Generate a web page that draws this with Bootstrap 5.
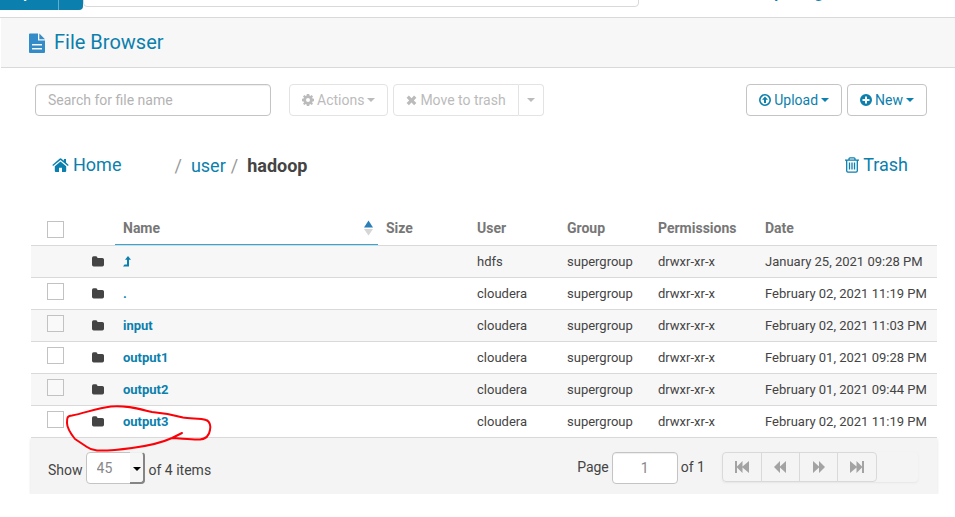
<!DOCTYPE html>
<html lang="en">
<head>
<meta charset="utf-8">
<meta name="viewport" content="width=device-width, initial-scale=1">
<title>File Browser</title>
<link href="https://cdn.jsdelivr.net/npm/bootstrap@5.3.0/dist/css/bootstrap.min.css" rel="stylesheet">
<style>
  :root { --hue: #0b7fad; --line: #d9d9d9; --dim: #bbb; }
  body { font-family: Roboto, "Liberation Sans", sans-serif; font-size: 14px; line-height: 20px; color: #444; background: #fff; }
  a { color: var(--hue); text-decoration: none; }
  svg { display: block; flex: none; fill: currentColor; }

  .topbar { height: 18px; overflow: hidden; border-bottom: 1px solid var(--line); }
  .query-group { margin-bottom: 7px; }
  .query-group .btn { height: 32px; border: 0; background: var(--hue); color: #fff; font-size: 14px; line-height: 20px; }
  .query-group .query-main { width: 58px; padding: 5px 28px 7px 0; border-radius: 0; text-align: right; direction: rtl; }
  .query-group .query-more { width: 25px; margin-left: 0; padding: 0; border-left: 1px solid #5fb0cf; border-radius: 0 4px 4px 0; }
  .top-search { width: 556px; height: 32px; margin: 0 0 10px; border: 1px solid var(--line); border-radius: 4px; }
  .account { margin: 0 100px 14px 0; font-size: 15px; font-weight: 700; }

  .page-head { height: 50px; margin-left: 1px; padding-left: 28px; gap: 9px; background: #f7f7f7; border-bottom: 1px solid var(--line); }
  .page-head h1 { font-size: 20px; line-height: 28px; font-weight: 400; color: var(--hue); padding-bottom: 2px; }
  .page-head svg { color: #338bc7; }

  .tools { padding: 16px 28px 0 35px; }
  .tools .form-control { width: 236px; height: 32px; margin-right: 18px; padding: 0 12px; font-size: 14px; border: 1px solid #c4c4c4; border-radius: 4px; box-shadow: inset 0 1px 1px #eee; }
  .tools .form-control::placeholder { color: #b3b3b3; opacity: 1; }
  .tool-btn { display: inline-flex; align-items: center; height: 32px; padding: 0 12px; gap: 3px; border: 1px solid #c4c4c4; border-radius: 4px; background: #fff; color: var(--hue); font-size: 14px; line-height: 20px; white-space: nowrap; }
  .tool-btn:disabled { border-color: #e3e3e3; color: var(--dim); background: #fff; opacity: 1; }
  .tool-btn.only-caret { padding: 0 8px; }
  .gap-5px { gap: 5px; }

  .crumbs { padding: 36px 47px 0 52px; font-size: 18px; line-height: 26px; }
  .crumbs ol { font-size: 18px; padding: 1px 0 0 53px; }
  .crumbs .slash { color: #999; padding-right: 9px; }
  .crumbs .trail { margin-right: 5px; }
  .crumbs .here { font-weight: 700; color: #444; }
  .crumbs a { display: inline-flex; align-items: center; gap: 4px; }

  .listing { margin: 34px 18px 0 31px; }
  .files { width: 100%; table-layout: fixed; border-collapse: separate; border-spacing: 0; font-size: 13px; }
  .files th, .files td { height: 32px; padding: 0 8px; vertical-align: middle; border-bottom: 1px solid var(--line); white-space: nowrap; }
  .files th { height: 33px; padding-bottom: 2px; font-size: 14px; font-weight: 700; color: #777; }
  .files th.sorted { padding-right: 0; box-shadow: inset 0 -1px #2fa9d8; }
  .files tbody tr:nth-child(odd) { background: #f7f7f7; }
  .files td a { font-weight: 700; }
  .files .tick-cell { padding-left: 16px; }
  .files .kind { padding-left: 9px; }
  .c-tick { width: 52px; } .c-icon { width: 32px; } .c-size { width: 91px; }
  .c-group { width: 91px; } .c-user { width: 90px; } .c-perm { width: 107px; } .c-date { width: 180px; }
  .tick { appearance: none; display: block; width: 17px; height: 17px; margin: 0; border: 1px solid #c2c2c2; background: #fff; border-radius: 0; }
  tbody .tick { margin-bottom: 4px; }
  tbody tr:nth-child(odd) .tick { background: #f9f9f9; }
  thead .tick { margin-top: 2px; }
  .tick:checked { background: var(--hue); }
  .scribble { position: absolute; left: -18px; top: -2px; z-index: 2; pointer-events: none; fill: none; stroke: #fb0007; stroke-width: 2; stroke-linecap: round; stroke-linejoin: round; }

  .pager { padding: 14px 19px 10px 17px; background: #f4f4f4; box-shadow: 0 1px 3px #ddd; }
  .count { position: relative; width: 59px; height: 32px; margin: 0 4px 0 3px; }
  .count select { appearance: none; width: 100%; height: 32px; padding: 0 10px; border: 1px solid #c4c4c4; border-radius: 4px; background: #fff; color: #888; font-size: 14px; }
  .count span { position: absolute; right: 0; top: 0; width: 15px; height: 32px; padding: 14px 0 0 3px; border: solid #858585; border-width: 1px 2px 2px 0; border-top-color: #eee; border-radius: 0 4px 4px 0; background: #f6f6f6; color: #000; pointer-events: none; }
  .page-no { width: 66px; height: 32px; margin: 0 3px; padding: 0; border: 1px solid #c4c4c4; border-radius: 4px; background: #fff; color: #888; text-align: center; font-size: 14px; box-shadow: inset 0 1px 1px #eee; }
  .page-label { padding-top: 5px; }
  .steps { width: 196px; margin-left: 17px; border-radius: 4px; box-shadow: 0 1px 2px #e6e6e6; }
  .steps button { display: flex; align-items: center; justify-content: center; width: 39px; height: 30px; margin-left: -1px; padding: 0; border: 1px solid var(--line); background: #f4f4f4; color: #a3a3a3; }
  .steps button:first-child { width: 40px; margin-left: 0; border-radius: 4px 0 0 4px; }
  .steps button:last-child { width: 40px; border-radius: 0 4px 4px 0; }
</style>
</head>
<body>
<svg class="d-none" aria-hidden="true">
  <symbol id="caret" viewBox="0 0 8 4"><path d="M0 0h8L4 4z"/></symbol>
  <symbol id="folder" viewBox="0 0 12 11"><path d="M0 2Q0 .3 1.600.3H4Q5.400.3 5.500 2H10.300Q12 2 12 3.600V8.800Q12 10.500 10.300 10.500H1.700Q0 10.500 0 8.800z"/></symbol>
</svg>

<header class="topbar d-flex align-items-end">
  <div class="query-group btn-group">
    <button class="btn query-main" type="button">Query</button><button class="btn query-more ms-0" type="button" aria-label="More editors"></button>
  </div>
  <input class="top-search" type="search" aria-label="Search data and saved documents">
  <a class="account ms-auto" href="#">pavangoud_</a>
</header>

<div class="page-head d-flex align-items-center">
  <svg width="16" height="20" viewBox="0 0 16 20"><path fill-rule="evenodd" d="M1 .5H9V7.500H16V19Q16 20 15 20H1Q0 20 0 19V1.500Q0 .5 1 .5zM3 11V12.500H13V11zM3 15V16.500H13V15z"/><path d="M10.300.5 16 6.200H10.300z"/></svg>
  <h1 class="m-0">File Browser</h1>
</div>

<main>
  <div class="tools d-flex align-items-center">
    <input class="form-control" type="text" placeholder="Search for file name" aria-label="Search for file name">
    <div class="d-flex gap-5px">
      <button class="tool-btn" type="button" disabled>
        <svg width="12" height="12" viewBox="0 0 12 12"><path fill-rule="evenodd" d="M4.800 0H7.200L7.500 1.600 8.400 2 9.700 1 11 2.400 10.100 3.700 10.500 4.600 12 4.800V7.200L10.500 7.500 10.100 8.400 11 9.700 9.700 11 8.400 10.100 7.500 10.500 7.200 12H4.800L4.600 10.500 3.700 10.100 2.400 11 1 9.700 2 8.400 1.600 7.500 0 7.200V4.800L1.600 4.600 2 3.700 1 2.400 2.400 1 3.700 2 4.600 1.600zM6 4A2 2 0 1 0 6 8 2 2 0 1 0 6 4z"/></svg>
        Actions <svg width="8" height="4"><use href="#caret"/></svg>
      </button>
      <div class="btn-group">
        <button class="tool-btn rounded-end-0" type="button" disabled>
          <svg width="11" height="11" viewBox="0 0 11 11"><path d="M.6 2.800 2.900.6 5.500 3.200 8.100.6 10.400 2.800 7.800 5.400 10.400 8 8.100 10.200 5.500 7.600 2.900 10.200.6 8 3.200 5.400z"/></svg>
          Move to trash
        </button><button class="tool-btn only-caret rounded-start-0 border-start-0" type="button" disabled aria-label="More delete options"><svg width="8" height="4"><use href="#caret"/></svg></button>
      </div>
    </div>
    <div class="d-flex gap-5px ms-auto">
      <button class="tool-btn" type="button">
        <svg width="12" height="12" viewBox="0 0 12 12"><path fill-rule="evenodd" d="M6 0A6 6 0 1 1 6 12 6 6 0 1 1 6 0zM6 1.600A4.400 4.400 0 1 0 6 10.400 4.400 4.400 0 1 0 6 1.600z"/><path d="M6 2.600 9 5.800H7V9H5V5.800H3z"/></svg>
        Upload <svg width="8" height="4"><use href="#caret"/></svg>
      </button>
      <button class="tool-btn" type="button">
        <svg width="12" height="12" viewBox="0 0 12 12"><path fill-rule="evenodd" d="M6 0A6 6 0 1 1 6 12 6 6 0 1 1 6 0zM5 2.500V5H2.500V7H5V9.500H7V7H9.500V5H7V2.500z"/></svg>
        New <svg width="8" height="4"><use href="#caret"/></svg>
      </button>
    </div>
  </div>

  <nav class="crumbs d-flex align-items-start" aria-label="Path">
    <a href="#"><svg width="17" height="14" viewBox="0 0 17 14"><path d="M8.500 3.600 14.200 8.300V13Q14.200 14 13.200 14H10V9.800H7V14H3.800Q2.800 14 2.800 13V8.300z"/><path d="M8.500.3Q9 .3 9.500.8L11.900 2.800V1H14V4.600L16.700 6.900 15.900 7.900 8.500 1.900 1.100 7.900.3 6.900 7.500.8Q8 .3 8.500.3z"/></svg>Home</a>
    <ol class="list-unstyled d-flex m-0">
      <li class="slash">/</li>
      <li class="trail"><a href="#">user</a></li>
      <li class="slash">/</li>
      <li class="here" aria-current="page">hadoop</li>
    </ol>
    <a class="ms-auto" href="#"><svg width="14" height="16" viewBox="0 0 14 16"><g fill="none" stroke="currentColor" stroke-width="1.300"><path d="M0 3.200H14M4 3V1.700Q4 .8 5 .8H9Q10 .8 10 1.700V3M1.700 3.500V13.800Q1.700 15.200 3 15.200H11Q12.300 15.200 12.300 13.800V3.500M4.500 5.500V12.500M7 5.500V12.500M9.500 5.500V12.500"/></g></svg>Trash</a>
  </nav>

  <section class="listing">
    <table class="files">
      <colgroup><col class="c-tick"><col class="c-icon"><col><col class="c-size"><col class="c-user"><col class="c-group"><col class="c-perm"><col class="c-date"></colgroup>
      <thead>
        <tr>
          <th class="tick-cell"><input class="tick" type="checkbox" aria-label="Select all"></th>
          <th></th>
          <th class="sorted"><div class="d-flex align-items-center justify-content-between">Name
            <svg width="19" height="16" viewBox="0 0 19 16"><path fill="#2a7fb9" d="M5 7.500 9.500.5 14 7.500z"/><path fill="#d6d6d6" d="M5 9H14L9.500 15.500z"/></svg></div></th>
          <th>Size</th><th>User</th><th>Group</th><th>Permissions</th><th>Date</th>
        </tr>
      </thead>
      <tbody>
        <tr>
          <td></td><td class="kind"><svg width="12" height="11"><use href="#folder"/></svg></td>
          <td><a href="#" aria-label="Parent folder"><svg width="8" height="11" viewBox="0 0 8 11"><path d="M5 0 8 3.700H6V10.500H0L1.500 8.500H4V3.700H2z"/></svg></a></td>
          <td></td><td>hdfs</td><td>supergroup</td><td>drwxr-xr-x</td><td>January 25, 2021 09:28 PM</td>
        </tr>
        <tr>
          <td class="tick-cell"><input class="tick" type="checkbox" aria-label="Select ."></td><td class="kind"><svg width="12" height="11"><use href="#folder"/></svg></td>
          <td><a href="#">.</a></td><td></td><td>cloudera</td><td>supergroup</td><td>drwxr-xr-x</td><td>February 02, 2021 11:19 PM</td>
        </tr>
        <tr>
          <td class="tick-cell"><input class="tick" type="checkbox" aria-label="Select input"></td><td class="kind"><svg width="12" height="11"><use href="#folder"/></svg></td>
          <td><a href="#">input</a></td><td></td><td>cloudera</td><td>supergroup</td><td>drwxr-xr-x</td><td>February 02, 2021 11:03 PM</td>
        </tr>
        <tr>
          <td class="tick-cell"><input class="tick" type="checkbox" aria-label="Select output1"></td><td class="kind"><svg width="12" height="11"><use href="#folder"/></svg></td>
          <td><a href="#">output1</a></td><td></td><td>cloudera</td><td>supergroup</td><td>drwxr-xr-x</td><td>February 01, 2021 09:28 PM</td>
        </tr>
        <tr>
          <td class="tick-cell"><input class="tick" type="checkbox" aria-label="Select output2"></td><td class="kind"><svg width="12" height="11"><use href="#folder"/></svg></td>
          <td><a href="#">output2</a></td><td></td><td>cloudera</td><td>supergroup</td><td>drwxr-xr-x</td><td>February 01, 2021 09:44 PM</td>
        </tr>
        <tr>
          <td class="tick-cell"><input class="tick" type="checkbox" aria-label="Select output3"></td>
          <td class="kind position-relative"><svg width="12" height="11"><use href="#folder"/></svg>
            <svg class="scribble" width="148" height="50" viewBox="65 404 148 50"><path d="M182 433 172 438C159 444 147 446 132 448Q110 451 97 450.500 91 450 87 447L75 439Q67 429 67 423C67 418 67 416 72 415.500 85 413 97 408 111 406.500 126 405 139 409 152 412 165 413 174 415 183 417.500 190 419 200 418 206 420 210 421 211 427 210 430 209 437 205 439 200 439.500 193 440 182 438.500 172 438"/></svg></td>
          <td><a href="#">output3</a></td><td></td><td>cloudera</td><td>supergroup</td><td>drwxr-xr-x</td><td>February 02, 2021 11:19 PM</td>
        </tr>
      </tbody>
    </table>

    <footer class="pager d-flex align-items-start mt-0">
      <label class="pt-2" for="count">Show</label>
      <div class="count"><select id="count"><option>45</option><option>100</option></select><span><svg width="8" height="4"><use href="#caret"/></svg></span></div>
      <span class="pt-2">of 4 items</span>
      <label class="ms-auto page-label" for="page">Page</label>
      <input class="page-no" id="page" type="text" value="1">
      <span class="page-label">of 1</span>
      <div class="steps d-flex">
        <button type="button" aria-label="First page"><svg width="15" height="12" viewBox="0 0 15 12"><path d="M0 0H2V5.500L7.500 0V5.500L14 0V12L7.500 6.500V12L2 6.500V12H0z"/></svg></button>
        <button type="button" aria-label="Previous page"><svg width="13" height="12" viewBox="0 0 13 12"><path d="M0 6 6 0V5.500L12 0V12L6 6.500V12z"/></svg></button>
        <button type="button" aria-label="Next page"><svg width="13" height="12" viewBox="0 0 13 12"><path d="M13 6 7 0V5.500L1 0V12L7 6.500V12z"/></svg></button>
        <button type="button" aria-label="Last page"><svg width="15" height="12" viewBox="0 0 15 12"><path d="M14 0H12V5.500L6.500 0V5.500L0 0V12L6.500 6.500V12L12 6.500V12H14z"/></svg></button>
      </div>
    </footer>
  </section>
</main>
<script src="https://cdn.jsdelivr.net/npm/bootstrap@5.3.0/dist/js/bootstrap.bundle.min.js"></script>
</body>
</html>
